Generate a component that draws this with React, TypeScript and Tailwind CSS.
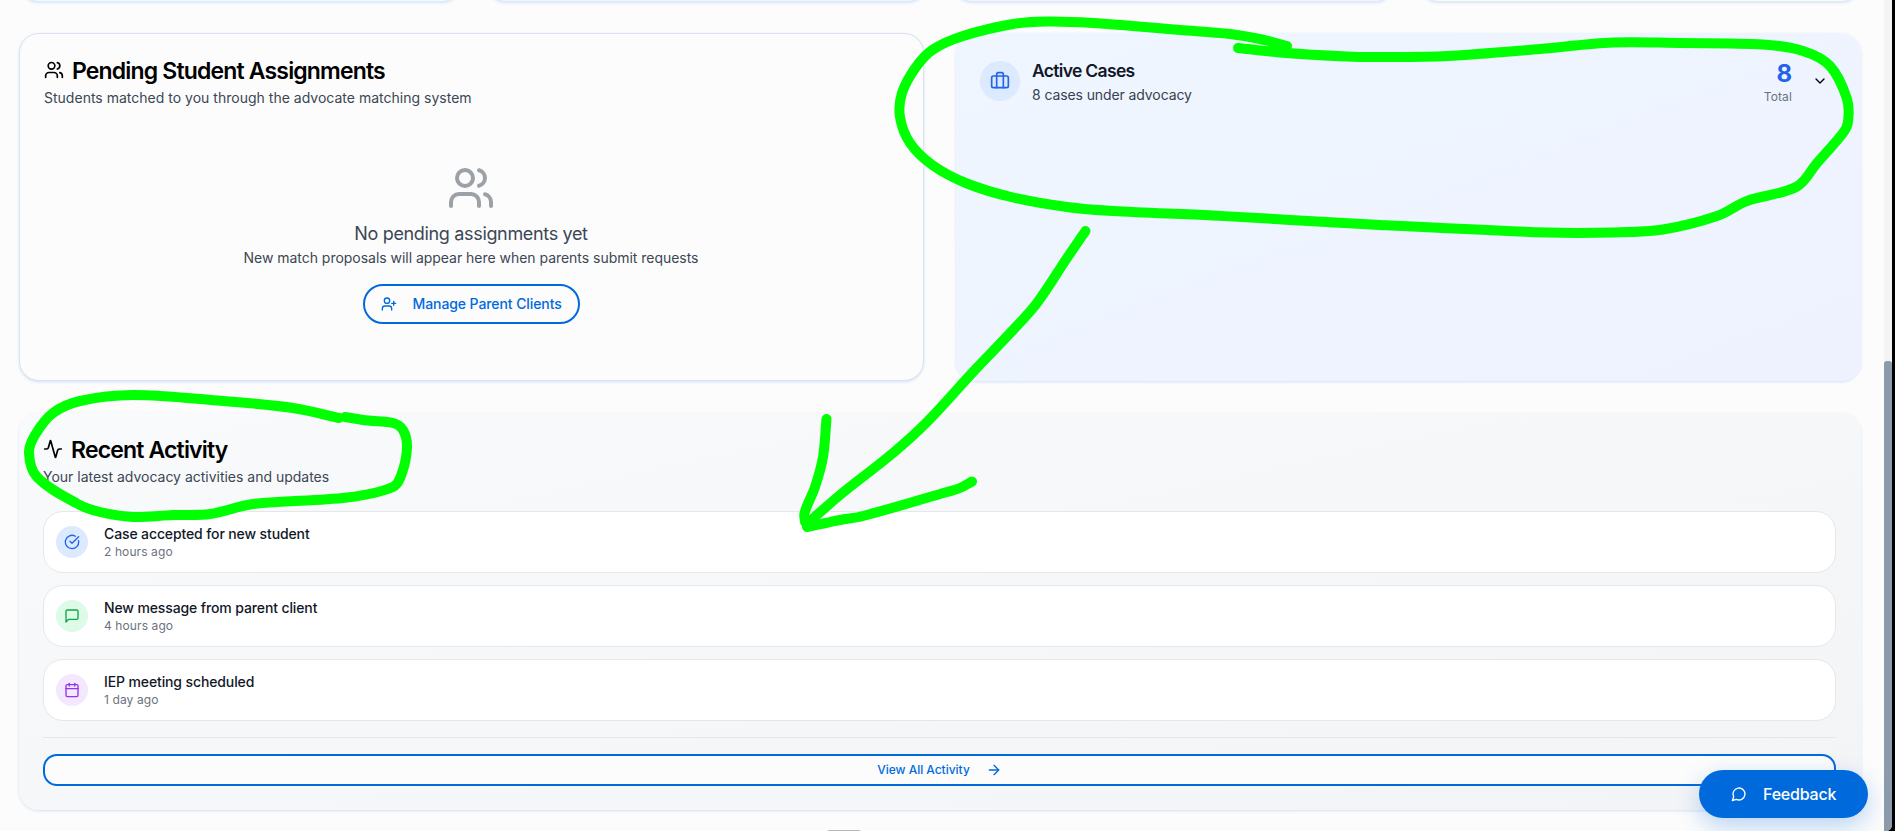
import type { ReactNode } from "react";
import { Activity, ArrowRight, Briefcase, Calendar, ChevronDown, CircleCheckBig, UserPlus, Users } from "lucide-react";

type Point = [number, number];

const strokes: Point[][] = [
  [[1287, 46], [1262, 39.5], [1230, 34], [1180, 30], [1093, 23], [1047, 21.5], [1013, 24], [963, 36], [933, 49.5], [916, 67], [902, 93], [900, 117], [910, 143], [933, 165.5], [967, 183.5], [1013, 197.5], [1067, 207], [1113, 211], [1213, 215.5], [1380, 225], [1547, 232.5], [1613, 232.5], [1663, 229.5], [1717, 216], [1747, 201], [1797, 186.5], [1817, 163], [1843, 133], [1848, 122], [1847, 99], [1830, 66], [1803, 51], [1763, 44.5], [1680, 43], [1613, 42.5], [1540, 49], [1447, 56], [1380, 57], [1347, 56.5], [1280, 52.5], [1238, 48]],
  [[339, 418], [293, 408], [217, 400.5], [133, 395], [80, 401], [53, 413], [35, 435], [29, 453], [37, 477], [77, 503.5], [100, 512], [133, 517], [173, 515], [210, 514], [253, 504], [347, 497.5], [393, 487], [402, 473], [407, 447], [403, 430], [393, 423], [368, 420.5], [345, 417]],
  [[1085.5, 231], [1067, 258], [1037, 303], [1013, 330], [973, 372], [927, 422], [893, 453], [840, 495], [808, 523]],
  [[826.5, 419], [823, 457], [815, 487], [804.5, 513], [805, 522]],
  [[807, 527], [840, 520], [863, 516], [947, 492], [960, 488], [972, 481.5]],
];

function smoothPath(points: Point[]) {
  let d = `M${points[0][0]} ${points[0][1]}`;
  for (let i = 0; i < points.length - 1; i++) {
    const a = points[Math.max(i - 1, 0)];
    const b = points[i];
    const c = points[i + 1];
    const e = points[Math.min(i + 2, points.length - 1)];
    const len = Math.hypot(c[0] - b[0], c[1] - b[1]);
    const t1 = Math.hypot(c[0] - a[0], c[1] - a[1]) || 1;
    const t2 = Math.hypot(e[0] - b[0], e[1] - b[1]) || 1;
    const k1 = len / 3 / t1;
    const k2 = len / 3 / t2;
    d += `C${b[0] + (c[0] - a[0]) * k1} ${b[1] + (c[1] - a[1]) * k1} ${c[0] - (e[0] - b[0]) * k2} ${c[1] - (e[1] - b[1]) * k2} ${c[0]} ${c[1]}`;
  }
  return d;
}

function MessageSquareIcon() {
  return (
    <svg className="size-4" viewBox="0 0 24 24" fill="none" stroke="currentColor" strokeWidth="2" strokeLinecap="round" strokeLinejoin="round">
      <path d="M21 15a2 2 0 0 1-2 2H7l-4 4V5a2 2 0 0 1 2-2h14a2 2 0 0 1 2 2z" />
    </svg>
  );
}

function MessageCircleIcon() {
  return (
    <svg className="size-4" viewBox="0 0 24 24" fill="none" stroke="currentColor" strokeWidth="2" strokeLinecap="round" strokeLinejoin="round">
      <path d="M7.9 20A9 9 0 1 0 4 16.1L2 22Z" />
    </svg>
  );
}

function ActivityRow({ icon, tone, title, time }: { icon: ReactNode; tone: string; title: string; time: string }) {
  return (
    <div className="flex h-[62px] items-center gap-4 rounded-[20px] border border-[#e5e7eb] bg-white px-3">
      <div className={`flex size-8 items-center justify-center rounded-full ${tone}`}>{icon}</div>
      <div>
        <p className="text-sm leading-5 font-medium tracking-[-0.12px] text-[#111827]">{title}</p>
        <p className="text-xs leading-4 tracking-[0.1px] text-[#6b7280]">{time}</p>
      </div>
    </div>
  );
}

export default function App() {
  return (
    <div className="relative flex h-[831px] w-[1895px] overflow-hidden bg-black font-[Inter,sans-serif] text-black">
      <main className="w-[1884px] bg-[#fcfcfc] pl-[19px]">
        <div className="grid h-[33px] w-[1842px] grid-cols-4 gap-6 overflow-visible">
          <div className="-mt-10 h-[42px] rounded-[20px] border border-blue-100 bg-cyan-50 shadow-[0_1px_3px_rgba(0,106,220,0.15)]" />
          <div className="-mt-10 h-[42px] rounded-[20px] border border-blue-100 bg-blue-50 shadow-[0_1px_3px_rgba(0,106,220,0.15)]" />
          <div className="-mt-10 h-[42px] rounded-[20px] border border-blue-100 bg-pink-50 shadow-[0_1px_3px_rgba(0,106,220,0.15)]" />
          <div className="-mt-10 h-[42px] rounded-[20px] border border-blue-100 bg-yellow-50 shadow-[0_1px_3px_rgba(0,106,220,0.15)]" />
        </div>

        <div className="grid h-[348px] w-[1842px] grid-cols-2 gap-8">
          <section className="rounded-[20px] border border-[#dbe4f0] bg-[#fcfcfc] px-6 pt-[23px] shadow-[0_1px_3px_rgba(0,106,220,0.18)]">
            <h2 className="flex h-7 items-center gap-2 text-[23px] leading-7 font-semibold tracking-[-0.83px]">
              <Users className="size-5 -translate-y-px" />
              Pending Student Assignments
            </h2>
            <p className="mt-[3px] text-sm leading-5 tracking-[0.01px] text-[#3b4754]">Students matched to you through the advocate matching system</p>
            <div className="mt-14 flex flex-col items-center pr-px">
              <Users className="size-12 text-[#9ba1a6]" />
              <p className="mt-2 text-lg leading-7 tracking-[-0.34px] text-[#3b4754]">No pending assignments yet</p>
              <p className="text-sm leading-5 tracking-[-0.03px] text-[#3b4754]">New match proposals will appear here when parents submit requests</p>
              <button className="mt-4 flex h-10 w-[217px] items-center rounded-[20px] border-2 border-[#006adc] pl-4 text-sm font-medium tracking-[-0.09px] whitespace-nowrap text-[#006adc]">
                <UserPlus className="mr-4 size-4" />
                Manage Parent Clients
              </button>
            </div>
          </section>

          <section className="rounded-[20px] bg-linear-to-br from-[#eff6ff] to-[#eef2ff] shadow-[0_1px_3px_rgba(0,106,220,0.18)]">
            <div className="flex items-center pt-6 pr-[33px] pl-6">
              <div className="flex size-10 items-center justify-center rounded-full bg-[#dbeafe] text-[#2563eb]">
                <Briefcase className="size-5" />
              </div>
              <div className="ml-3 flex-1">
                <h3 className="text-[17.5px] leading-7 font-semibold tracking-[-0.68px] text-[#111827]">Active Cases</h3>
                <p className="text-sm leading-5 tracking-[-0.1px] text-[#374151]">8 cases under advocacy</p>
              </div>
              <div className="mr-5 text-right">
                <p className="translate-y-px text-2xl leading-8 font-bold text-[#2563eb]">8</p>
                <p className="text-xs leading-4 tracking-[0.12px] text-[#6b7280]">Total</p>
              </div>
              <ChevronDown className="size-4" />
            </div>
          </section>
        </div>

        <section className="mt-8 h-[397px] w-[1842px] rounded-[20px] bg-linear-to-br from-[#f9fafb] to-[#f3f4f6] pt-[23px] pr-[25px] pl-6 shadow-[0_1px_3px_rgba(0,106,220,0.18)]">
          <h2 className="flex h-7 items-center gap-2 text-[23px] leading-7 font-semibold tracking-[-0.83px]">
            <Activity className="size-5 -translate-y-px" />
            Recent Activity
          </h2>
          <p className="mt-[3px] text-sm leading-5 tracking-[-0.01px] text-[#3b4754]">Your latest advocacy activities and updates</p>
          <div className="mt-6 flex flex-col gap-3">
            <ActivityRow tone="bg-[#dbeafe] text-[#2563eb]" icon={<CircleCheckBig className="size-4" />} title="Case accepted for new student" time="2 hours ago" />
            <ActivityRow tone="bg-[#dcfce7] text-[#16a34a]" icon={<MessageSquareIcon />} title="New message from parent client" time="4 hours ago" />
            <ActivityRow tone="bg-[#f3e8ff] text-[#9333ea]" icon={<Calendar className="size-4" />} title="IEP meeting scheduled" time="1 day ago" />
          </div>
          <div className="mt-4 border-t border-[#e5e7eb] pt-4">
            <button className="flex h-8 w-full items-center justify-center gap-4 rounded-[14px] border-2 border-[#006adc] bg-[#fcfcfc] text-xs font-medium tracking-[-0.02px] text-[#006adc]">
              View All Activity
              <ArrowRight className="size-4" />
            </button>
          </div>
        </section>
        <div className="mt-5 ml-[807px] h-1 w-9 rounded-t bg-[#b5b5b5]" />
      </main>

      <div className="flex h-full w-2 flex-col rounded-br-md bg-[#f4f4f5]">
        <div className="mt-[361px] flex-1 rounded-t-[3px] rounded-br-md bg-[#8b9bab]" />
      </div>

      <button className="absolute top-[770px] left-[1699px] flex h-12 w-[169px] items-center gap-4 rounded-full bg-[#006adc] pl-8 text-base font-medium tracking-[-0.2px] text-white shadow-[0_8px_24px_rgba(0,106,220,0.28)]">
        <MessageCircleIcon />
        Feedback
      </button>

      <svg className="pointer-events-none absolute inset-0 size-full" viewBox="0 0 1895 831" fill="none" stroke="#00ff00" strokeWidth="10" strokeLinecap="round" strokeLinejoin="round">
        {strokes.map((points, i) => (
          <path key={i} d={smoothPath(points)} />
        ))}
      </svg>
    </div>
  );
}
